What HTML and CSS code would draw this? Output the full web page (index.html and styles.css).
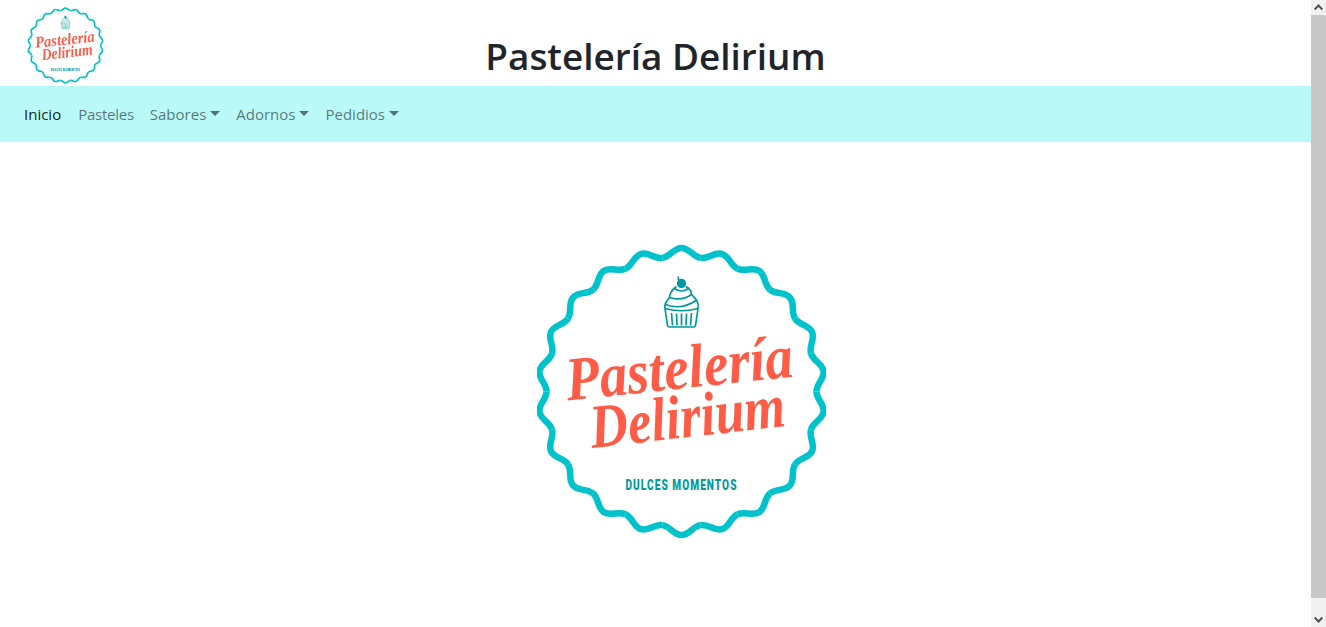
FILE: index.html
```html
<!DOCTYPE HTML>
<html>
    <head>
        <meta http-equiv="Content-Type" content="text/html; charset=UTF-8"/>
        <title>Pastelería Delirium</title>
        <link rel="stylesheet" href="styles.css">
    </head>
    <body>
        <svg class="defs" width="0" height="0">
            <defs>
                <path id="wave" d="M-19.2,-133.6 C-11.2,-134.7 -8,-143.5 0,-143.5 C8,-143.5 11.2,-134.7 19.2,-133.6"/>
                <g id="wave-half">
                    <use href="#wave"/>
                    <use href="#wave" transform="rotate(16.36)"/>
                    <use href="#wave" transform="rotate(32.73)"/>
                    <use href="#wave" transform="rotate(49.09)"/>
                    <use href="#wave" transform="rotate(65.45)"/>
                    <use href="#wave" transform="rotate(81.82)"/>
                    <use href="#wave" transform="rotate(98.18)"/>
                    <use href="#wave" transform="rotate(114.55)"/>
                    <use href="#wave" transform="rotate(130.91)"/>
                    <use href="#wave" transform="rotate(147.27)"/>
                    <use href="#wave" transform="rotate(163.64)"/>
                </g>
                <symbol id="logo" viewBox="-144.5 -147.5 289 295">
                    <g class="ring">
                        <use href="#wave-half"/>
                        <use href="#wave-half" transform="rotate(180)"/>
                    </g>
                    <g class="cupcake">
                        <path d="M-3.3,-115 Q-3.5,-112 -2,-110"/>
                        <circle cx="0" cy="-108" r="3.8" class="cherry"/>
                        <path d="M-16.5,-83 L-14,-66 Q-13.5,-64.5 -12,-64.5 L12,-64.5 Q13.5,-64.5 14,-66 L16.5,-83"/>
                        <path d="M-16.5,-83 Q0,-78.5 16.5,-83"/>
                        <path d="M-16.5,-83 C-18,-88 -14,-91 -12,-94 C-12,-98 -9,-102 -5,-105"/>
                        <path d="M4.5,-105 C8,-103 10,-100 10,-97 C13,-94 18,-90 16.5,-83"/>
                        <path d="M-12,-94 Q0,-90 10,-97"/>
                        <path d="M-7,-103 Q0,-98 7,-103"/>
                        <path d="M-16,-87 Q0,-81 14.5,-91"/>
                        <path d="M-10,-78.5 L-9,-66 M-5,-78 L-4.5,-66 M0,-78 L0,-66 M5,-78 L4.5,-66 M10,-78.5 L9,-66"/>
                    </g>
                    <text class="script" x="-114" y="-3" textLength="228" lengthAdjust="spacingAndGlyphs" transform="rotate(-6)">Pastelería</text>
                    <text class="script" x="-95" y="46" textLength="196" lengthAdjust="spacingAndGlyphs" transform="rotate(-6.5)">Delirium</text>
                    <text class="tagline" x="0" y="98.5" text-anchor="middle" textLength="112" lengthAdjust="spacingAndGlyphs">DULCES MOMENTOS</text>
                </symbol>
            </defs>
        </svg>
        <div class="page">
            <div class="content">
                <header class="top">
                    <div class="brand">
                        <svg class="logo-small"><use href="#logo"/></svg>
                    </div>
                    <h1 class="title">Pastelería Delirium</h1>
                    <div></div>
                </header>
                <nav class="navbar">
                    <a class="nav-link active">Inicio</a>
                    <a class="nav-link tight">Pasteles</a>
                    <a class="nav-link dropdown">Sabores</a>
                    <a class="nav-link dropdown">Adornos</a>
                    <a class="nav-link dropdown">Pedidios</a>
                </nav>
                <main class="hero">
                    <svg class="logo-big"><use href="#logo"/></svg>
                </main>
            </div>
            <div class="scrollbar">
                <div class="arrow">
                    <svg width="15" height="15" viewBox="0 0 15 15"><path d="M7.5,4 L12,8.7 L10.6,10.2 L7.5,7 L4.4,10.2 L3,8.7 Z"/></svg>
                </div>
                <div class="thumb"></div>
                <div class="arrow bottom">
                    <svg width="15" height="15" viewBox="0 0 15 15"><path d="M7.5,11 L12,6.3 L10.6,4.8 L7.5,8 L4.4,4.8 L3,6.3 Z"/></svg>
                </div>
            </div>
        </div>
    </body>
</html>
```

FILE: styles.css
```css
html, body{
    margin:0;
    height:100%;
    overflow:hidden;
    background:#fff;
}
body{
    font-family:"Open Sans","Noto Sans",sans-serif;
    color:#212529;
}
.defs{
    display:block;
    height:0;
}
.page{
    display:flex;
    height:100vh;
}
.content{
    flex:1;
    min-width:0;
}
.top{
    display:grid;
    grid-template-columns:1fr auto 1fr;
    height:86px;
}
.brand{
    padding:7px 0 0 27px;
}
.logo-small{
    display:block;
    width:77px;
    height:77px;
    filter:blur(.35px);
}
.title{
    margin:0;
    align-self:end;
    font-size:36.9px;
    font-weight:600;
    line-height:56px;
    height:58px;
}
.navbar{
    display:flex;
    align-items:center;
    height:56px;
    padding:0 16px;
    background:#b9faf8;
    font-size:15px;
}
.nav-link{
    padding:8px;
    color:rgba(0,0,0,.55);
    line-height:24px;
}
.nav-link.active{
    color:rgba(0,0,0,.9);
}
.nav-link.tight{
    margin-left:1px;
    letter-spacing:-.25px;
}
.dropdown::after{
    content:"";
    display:inline-block;
    margin-left:4px;
    vertical-align:4px;
    border-top:5px solid;
    border-left:5px solid transparent;
    border-right:5px solid transparent;
}
.hero{
    display:flex;
    justify-content:center;
    padding:102px 0 0 52px;
}
.logo-big{
    display:block;
    width:289px;
    height:295px;
}
.ring{
    fill:none;
    stroke:#00c2cb;
    stroke-width:6.5;
}
.cupcake{
    fill:none;
    stroke:#03989e;
    stroke-width:1.7;
}
.cherry{
    fill:#03989e;
}
.script{
    font-family:"Liberation Serif",serif;
    font-style:italic;
    font-weight:700;
    font-size:62px;
    fill:#ff5c48;
}
.tagline{
    font-family:"Roboto",sans-serif;
    font-weight:900;
    font-size:14.5px;
    letter-spacing:1.5px;
    fill:#03989e;
}
.scrollbar{
    display:flex;
    flex-direction:column;
    width:15px;
    background:#f1f1f1;
}
.arrow{
    height:15px;
}
.arrow svg{
    display:block;
    fill:#505050;
}
.arrow.bottom{
    margin-top:auto;
    padding-top:14px;
}
.thumb{
    height:583px;
    background:#c8c8c8;
}
```
